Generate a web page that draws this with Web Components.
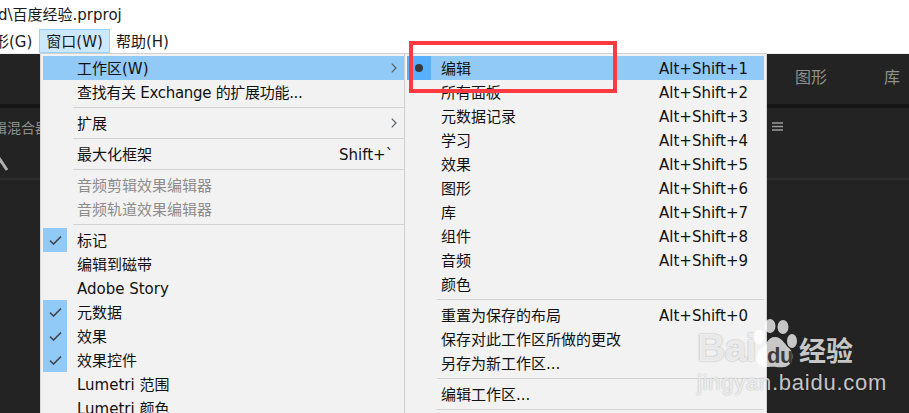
<!DOCTYPE html>
<html lang="zh-CN"><head><meta charset="utf-8"><title>窗口菜单</title>
<style>
html,body{margin:0;padding:0;width:909px;height:413px;overflow:hidden;background:#fff}
body{position:relative;font-family:"DejaVu Sans","Noto Sans CJK SC",sans-serif;font-size:15px;color:#111}
</style></head><body>
<title-bar>d\百度经验.prproj</title-bar>
<menu-bar>
  <bar-item clip>形(G)</bar-item>
  <bar-item active>窗口(W)</bar-item>
  <bar-item style="margin-left:-1px">帮助(H)</bar-item>
</menu-bar>
<dark-workspace></dark-workspace>
<menu-stack>
  <pop-menu style="--label-w:272px" first>
    <menu-item hl arrow>工作区(W)</menu-item>
    <menu-item style="letter-spacing:-.3px">查找有关 Exchange 的扩展功能...</menu-item>
    <menu-sep></menu-sep>
    <menu-item arrow>扩展</menu-item>
    <menu-sep></menu-sep>
    <menu-item shortcut="Shift+`">最大化框架</menu-item>
    <menu-sep></menu-sep>
    <menu-item disabled>音频剪辑效果编辑器</menu-item>
    <menu-item disabled>音频轨道效果编辑器</menu-item>
    <menu-sep></menu-sep>
    <menu-item mark="check">标记</menu-item>
    <menu-item>编辑到磁带</menu-item>
    <menu-item>Adobe Story</menu-item>
    <menu-item mark="check">元数据</menu-item>
    <menu-item mark="check">效果</menu-item>
    <menu-item mark="check">效果控件</menu-item>
    <menu-item>Lumetri 范围</menu-item>
    <menu-item>Lumetri 颜色</menu-item>
  </pop-menu>
  <pop-menu style="--label-w:228px;margin-left:-1px">
    <menu-item hl mark="dot" shortcut="Alt+Shift+1">编辑</menu-item>
    <menu-item shortcut="Alt+Shift+2">所有面板</menu-item>
    <menu-item shortcut="Alt+Shift+3">元数据记录</menu-item>
    <menu-item shortcut="Alt+Shift+4">学习</menu-item>
    <menu-item shortcut="Alt+Shift+5">效果</menu-item>
    <menu-item shortcut="Alt+Shift+6">图形</menu-item>
    <menu-item shortcut="Alt+Shift+7">库</menu-item>
    <menu-item shortcut="Alt+Shift+8">组件</menu-item>
    <menu-item shortcut="Alt+Shift+9">音频</menu-item>
    <menu-item>颜色</menu-item>
    <menu-sep></menu-sep>
    <menu-item shortcut="Alt+Shift+0">重置为保存的布局</menu-item>
    <menu-item>保存对此工作区所做的更改</menu-item>
    <menu-item>另存为新工作区...</menu-item>
    <menu-sep></menu-sep>
    <menu-item>编辑工作区...</menu-item>
    <menu-sep></menu-sep>
  </pop-menu>
</menu-stack>
<red-mark></red-mark>
<baidu-mark></baidu-mark>
<script>
function def(name, html, init){
  customElements.define(name, class extends HTMLElement{
    constructor(){super();this.attachShadow({mode:'open'}).innerHTML=html;}
    connectedCallback(){ if(init) init(this); }
  });
}
def('title-bar',`<style>:host{display:block;height:27px;line-height:30px;font-size:15px;color:#1a1a1a;white-space:nowrap;overflow:hidden;margin-left:-2px}</style><slot></slot>`);
def('menu-bar',`<style>:host{display:flex;height:26px;margin-left:-13px;gap:0;white-space:nowrap}</style><slot></slot>`);
def('bar-item',`<style>
:host{display:block;box-sizing:border-box;height:24px;margin-top:2px;padding:0 6px;line-height:24px;border:1px solid transparent;color:#1a1a1a}
:host([active]){background:#cce8ff;border-color:#99d1ff}
</style><slot></slot>`);
def('dark-workspace',`<style>
:host{display:block;position:absolute;left:0;right:0;top:53px;bottom:0;background:#232323;border-top:1px solid #f0f0f0;overflow:hidden;color:#8f8f8f}
.tabs{display:flex;justify-content:flex-end;gap:57px;height:50px;padding-right:9px;font-size:16px;line-height:48px}
.rule{height:4px;background:#161616}
.row{display:flex;justify-content:space-between;align-items:center;height:38px;padding-right:126px}
.cut{margin-left:-49px;white-space:nowrap;font-size:14px}
.tool{display:block;height:32px}
.rule2{height:2px;background:#2d2d2d}
</style>
<div class="tabs"><span>图形</span><span>库</span></div>
<div class="rule"></div>
<div class="row"><span class="cut">音频剪辑混合器</span>
<svg width="11" height="10" viewBox="0 0 11 10"><path d="M0 1h11M0 4.500h11M0 8h11" stroke="#9a9a9a" stroke-width="1.400"/></svg></div>
<svg class="tool" width="12" height="32" viewBox="0 0 12 32"><path d="M-1 12 7 24" stroke="#b0b0b0" stroke-width="3"/></svg>
<div class="rule2"></div>`);
def('menu-stack',`<style>:host{display:flex;position:absolute;left:40px;top:53px}</style><slot></slot>`);
def('pop-menu',`<style>
:host{display:block;box-sizing:border-box;height:360px;background:#f2f2f2;border:1px solid #cfcfcf;border-bottom:0;padding:2px 2px 0;width:363px;overflow:hidden;flex:none}
:host([first]){width:365px;padding-right:0;border-right:0;border-left-color:#d8d8d8}
</style><slot></slot>`);
def('menu-sep',`<style>:host{display:block;height:7px;margin-left:24px}
.w{padding-top:3px}i{display:block;height:1px;margin-left:6px;background:#d4d4d4}</style><div class="w"><i></i></div>`);
const CHECK=`<svg width="13" height="11" viewBox="0 0 13 11"><path d="M1 5.500 4.500 9 12 1.500" fill="none" stroke="#454a50" stroke-width="1.700"/></svg>`;
const DOT=`<svg width="8" height="8" viewBox="0 0 8 8"><circle cx="4" cy="4" r="4" fill="#36393d"/></svg>`;
const ARROW=`<svg width="6" height="10" viewBox="0 0 6 10"><path d="M.7.700 5 5 .7 9.300" fill="none" stroke="#5a5d60" stroke-width="1.200"/></svg>`;
def('menu-item',`<style>
:host{display:flex;height:24px;align-items:stretch;white-space:nowrap;color:#111}
:host([disabled]){color:#8c8c8c}
:host([hl]){background:#91c9f7}
.g{flex:0 0 24px;width:24px;display:flex;align-items:center;justify-content:center}
:host([mark="check"]) .g{background:#91c9f7}
:host([mark="dot"]) .g{background:#56b0fa}
.l{flex:0 0 var(--label-w);box-sizing:border-box;padding-left:10px;line-height:26px}
.s{line-height:26px}
.a{margin-left:auto;padding-right:8px;display:flex;align-items:center}
</style><span class="g"></span><span class="l"><slot></slot></span><span class="s"></span><span class="a"></span>`,
el=>{
  const r=el.shadowRoot, m=el.getAttribute('mark');
  r.querySelector('.g').innerHTML = m==='check'?CHECK : m==='dot'?DOT : '';
  r.querySelector('.s').textContent = el.getAttribute('shortcut')||'';
  if(el.hasAttribute('arrow')) r.querySelector('.a').innerHTML=ARROW;
});
def('red-mark',`<style>:host{display:block;position:absolute;left:409px;top:41px;width:208px;height:52px;box-sizing:border-box;border:4px solid #fd3a3f}</style>`);
def('baidu-mark',`<style>
:host{display:block;position:absolute;left:695px;top:322px;width:170px;height:80px;color:rgba(255,255,255,.75);font-family:"Liberation Sans",sans-serif}
.top{display:flex;align-items:flex-end;height:48px}
.bai{font-size:39px;font-weight:700;line-height:44px;width:66px;padding-left:2px;box-sizing:border-box;letter-spacing:-.5px;text-shadow:0 0 2px rgba(0,0,0,.32)}
.paw{position:relative;width:40px;height:48px;margin-left:-6px;flex:none}
.paw svg{display:block;overflow:visible}
.du{position:absolute;left:12px;top:24px;font-size:22px;font-weight:700;line-height:20px;letter-spacing:-.5px;color:#3b3b3b}
.jy{font:700 27px/30px "Noto Sans CJK SC",sans-serif;margin-left:4px;padding-bottom:5px;white-space:nowrap;text-shadow:0 0 2px rgba(0,0,0,.1)}
.url{font-size:22px;line-height:24px;margin:1px 0 0 2px;white-space:nowrap;letter-spacing:.75px;text-shadow:0 0 1.500px rgba(0,0,0,.32)}
</style>
<div class="top"><span class="bai">Bai</span>
<span class="paw"><svg width="40" height="48" viewBox="0 0 40 48"><g fill="rgba(255,255,255,.75)">
<ellipse cx="4" cy="15" rx="5.500" ry="7.500"/><ellipse cx="15" cy="4" rx="5.500" ry="7"/><ellipse cx="28" cy="5" rx="5.500" ry="7"/><ellipse cx="37" cy="19" rx="5" ry="7"/>
<path d="M20 15C27 15 29 22 34 26 40 31 38 44 29 45 23 46 19 44 14 45 5 46-1 40 2 32 4 27 10 25 12 20 14 17 16 15 20 15Z"/></g></svg><span class="du">du</span></span>
<span class="jy">经验</span></div>
<div class="url">jingyan.baidu.com</div>`);
</script>
</body></html>
